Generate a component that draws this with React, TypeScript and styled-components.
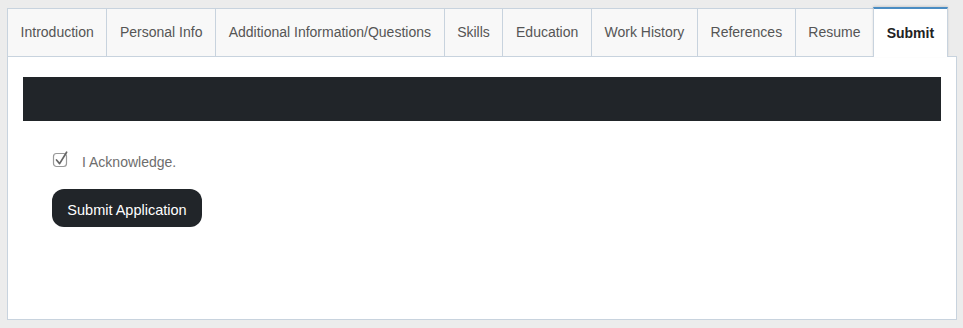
import React, { FC, useState } from 'react'
import styled, { createGlobalStyle } from 'styled-components'

const GlobalStyle = createGlobalStyle`
  body {
    margin: 0;
    background: #ececec;
    font-family: "Liberation Sans", Arial, sans-serif;
  }
`

const tabs = [
  'Introduction',
  'Personal Info',
  'Additional Information/Questions',
  'Skills',
  'Education',
  'Work History',
  'References',
  'Resume',
  'Submit',
]

const App: FC = () => {
  const [active, setActive] = useState('Submit')
  const [checked, setChecked] = useState(true)

  return (
    <>
      <GlobalStyle />
      <Wrapper>
        <TabBar>
          {tabs.map((tab) => (
            <Tab key={tab} $active={tab === active} onClick={() => setActive(tab)}>
              {tab}
            </Tab>
          ))}
        </TabBar>
        <Panel>
          <Banner />
          <Form>
            <CheckRow onClick={() => setChecked(!checked)}>
              <CheckBox width="18" height="18" viewBox="0 0 18 18">
                <rect x="1.5" y="3.5" width="13" height="13" rx="3" fill="#fff" stroke="#999" strokeWidth="1.2" />
                {checked && (
                  <path d="M4.5 10 L7.6 13.6 L14.6 2.2" fill="none" stroke="#666" strokeWidth="1.7" strokeLinecap="round" strokeLinejoin="round" />
                )}
              </CheckBox>
              <CheckLabel>I Acknowledge.</CheckLabel>
            </CheckRow>
            <SubmitButton type="button">Submit Application</SubmitButton>
          </Form>
        </Panel>
      </Wrapper>
    </>
  )
}

const Wrapper = styled.div`
  width: 950px;
  margin: 7px 0 0 7px;
`
const TabBar = styled.div`
  display: flex;
  align-items: flex-end;
  height: 49px;
`
const Tab = styled.div<{ $active: boolean }>`
  display: flex;
  align-items: center;
  box-sizing: border-box;
  padding: 0 12.6px 1px;
  height: ${(p) => (p.$active ? '50px' : '48px')};
  margin-bottom: ${(p) => (p.$active ? '-1px' : '0')};
  border-top: ${(p) => (p.$active ? '2px solid #4a8cc2' : '1px solid #c8d3de')};
  border-right: 1px solid #c8d3de;
  border-left: ${(p) => (p.$active ? '1px solid #c8d3de' : 'none')};
  margin-left: ${(p) => (p.$active ? '-1px' : '0')};
  background: ${(p) => (p.$active ? '#fff' : '#f8f8f8')};
  color: ${(p) => (p.$active ? '#222' : '#555')};
  font-size: 14px;
  font-weight: ${(p) => (p.$active ? 'bold' : 'normal')};
  cursor: pointer;
  position: relative;
  z-index: ${(p) => (p.$active ? 1 : 0)};
  box-shadow: ${(p) => (p.$active ? '0 -1px 2px rgba(0,0,0,0.12)' : 'none')};
  white-space: nowrap;

  &:first-child {
    border-left: 1px solid #c8d3de;
  }
`
const Panel = styled.div`
  box-sizing: border-box;
  height: 264px;
  border: 1px solid #c8d3de;
  background: #fff;
  padding: 20px 15px;
`
const Banner = styled.div`
  height: 44px;
  background: #212529;
`
const Form = styled.div`
  display: flex;
  flex-direction: column;
  align-items: flex-start;
  padding: 30px 29px 0;
`
const CheckRow = styled.label`
  display: flex;
  align-items: center;
  gap: 12px;
  height: 20px;
  cursor: pointer;
`
const CheckBox = styled.svg`
  display: block;
  margin-top: -4px;
`
const CheckLabel = styled.span`
  font-size: 14px;
  color: #6d6d6d;
  padding-top: 1px;
`
const SubmitButton = styled.button`
  margin-top: 18px;
  width: 150px;
  height: 38px;
  border: none;
  border-radius: 12px;
  background: #212529;
  color: #fff;
  font-family: "Liberation Sans", Arial, sans-serif;
  font-size: 14.5px;
  padding: 3px 0 0;
  cursor: pointer;
`

export default App
